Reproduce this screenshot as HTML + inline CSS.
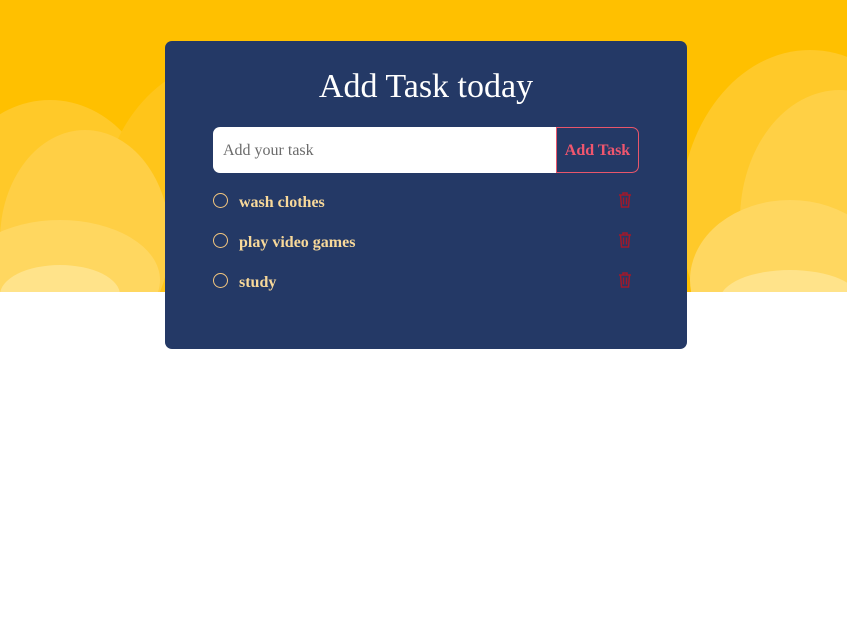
<!DOCTYPE html>
<html><head><meta charset="utf-8"><style>
html,body{margin:0;padding:0;width:847px;height:631px;overflow:hidden;background:#fff;font-family:"Liberation Serif",serif}
.bg{position:absolute;left:0;top:0;width:847px;height:292px;background:#ffc000;overflow:hidden}
.c{position:absolute;border-radius:50%}
.card{position:absolute;left:165px;top:41px;width:522px;height:308px;background:#243966;border-radius:7px}
h1{margin:0;position:absolute;top:27px;left:0;width:522px;text-align:center;color:#fff;font-weight:normal;font-size:34px}
.inp{position:absolute;left:48px;top:86px;width:343px;height:46px;background:#fff;border-radius:7px 0 0 7px;color:#6b6b6b;font-size:16px;line-height:48px;padding-left:10px;box-sizing:border-box}
.btn{position:absolute;left:391px;top:86px;width:83px;height:46px;border:1px solid #e8566b;border-radius:0 7px 7px 0;box-sizing:border-box;color:#f0566e;font-size:16px;line-height:46px;text-align:center;font-weight:bold}
.item{position:absolute;left:48px;height:20px;width:426px;color:#f8d99a;font-size:16px;font-weight:bold}
.item .o{position:absolute;left:0;top:2px;width:13px;height:13px;border:1.5px solid #f3c77f;border-radius:50%}
.item span{position:absolute;left:26px;top:2px;line-height:20px}
.item svg{position:absolute;left:405px;top:1px}
</style></head><body>
<div class="bg">
<div class="c" style="left:-60px;top:100px;width:220px;height:260px;background:#ffc929"></div>
<div class="c" style="left:100px;top:60px;width:260px;height:320px;background:#ffc51a"></div>
<div class="c" style="left:0;top:130px;width:170px;height:220px;background:#ffcf45"></div>
<div class="c" style="left:-40px;top:220px;width:200px;height:120px;background:#ffd760"></div>
<div class="c" style="left:680px;top:50px;width:260px;height:330px;background:#ffc929"></div>
<div class="c" style="left:740px;top:90px;width:200px;height:260px;background:#ffd045"></div>
<div class="c" style="left:690px;top:200px;width:200px;height:160px;background:#ffd760"></div>
<div class="c" style="left:0;top:265px;width:120px;height:60px;background:#ffe38a"></div>
<div class="c" style="left:720px;top:270px;width:140px;height:60px;background:#ffe38a"></div>
</div>
<div class="card">
<h1>Add Task today</h1>
<div class="inp">Add your task</div>
<div class="btn">Add Task</div>
<div class="item" style="top:150px"><div class="o"></div><span>wash clothes</span><svg width="14" height="16" viewBox="0 0 14 16"><path d="M1 3h12M5 3V1h4v2M2.5 3l1 12h7l1-12M5.5 5.5v7M8.5 5.5v7" stroke="#a0192b" stroke-width="1.5" fill="none"/></svg></div>
<div class="item" style="top:190px"><div class="o"></div><span>play video games</span><svg width="14" height="16" viewBox="0 0 14 16"><path d="M1 3h12M5 3V1h4v2M2.5 3l1 12h7l1-12M5.5 5.5v7M8.5 5.5v7" stroke="#a0192b" stroke-width="1.5" fill="none"/></svg></div>
<div class="item" style="top:230px"><div class="o"></div><span>study</span><svg width="14" height="16" viewBox="0 0 14 16"><path d="M1 3h12M5 3V1h4v2M2.5 3l1 12h7l1-12M5.5 5.5v7M8.5 5.5v7" stroke="#a0192b" stroke-width="1.5" fill="none"/></svg></div>
</div>
</body></html>
